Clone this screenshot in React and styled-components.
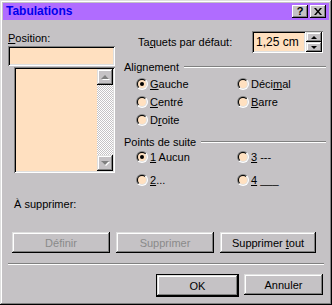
import styled, { createGlobalStyle } from "styled-components";

const GRAY = "#c5c2c5";
const PEACH = "#ffe0c0";

const GlobalStyle = createGlobalStyle`
  html, body {
    margin: 0;
    padding: 0;
    background: ${GRAY};
  }
  body {
    font-family: "Liberation Sans", Arial, sans-serif;
    font-size: 11px;
    color: #000;
  }
  u {
    text-underline-offset: 1px;
  }
`;

const Window = styled.div`
  width: 332px;
  height: 305px;
  box-sizing: border-box;
  padding: 3px;
  background: ${GRAY};
  box-shadow: inset -1px -1px #000, inset 1px 1px #dfdfdf, inset -2px -2px #808080,
    inset 2px 2px #fff;
  display: flex;
  flex-direction: column;
`;

const TitleBar = styled.div`
  height: 17px;
  background: #b06cff;
  display: flex;
  align-items: center;
  padding: 0 3px 0 2px;
`;

const TitleText = styled.span`
  flex: 1;
  font-family: "Liberation Sans", Arial, sans-serif;
  font-weight: 700;
  font-size: 12px;
  color: blue;
  -webkit-text-fill-color: #0000ee;
  line-height: 17px;
  padding-left: 1px;
`;

const TitleButton = styled.div`
  width: 16px;
  height: 13px;
  margin-left: ${(p) => (p.$gap ? "2px" : "0")};
  background: ${GRAY};
  box-shadow: inset -1px -1px #000, inset 1px 1px #fff, inset -2px -2px #808080;
  display: flex;
  align-items: center;
  justify-content: center;
  font-weight: bold;
  font-size: 11px;
  line-height: 11px;
`;

const Body = styled.div`
  flex: 1;
  display: flex;
  flex-direction: column;
  padding: 0 3px 0 5px;
`;

const TopRow = styled.div`
  display: flex;
  height: 169px;
`;

const LeftCol = styled.div`
  width: 107px;
  display: flex;
  flex-direction: column;
  padding-top: 12px;
`;

const RightCol = styled.div`
  flex: 1;
  margin-left: 9px;
  display: flex;
  flex-direction: column;
  padding-top: 11px;
`;

const Label = styled.div`
  line-height: 13px;
  height: 13px;
  white-space: nowrap;
`;

const Sunken = styled.div`
  background: ${PEACH};
  box-sizing: border-box;
  box-shadow: inset 1px 1px #808080, inset -1px -1px #fff, inset 2px 2px #000,
    inset -2px -2px #dfdfdf;
`;

const PositionInput = styled(Sunken)`
  height: 20px;
  margin-top: 1px;
`;

const ListBox = styled(Sunken)`
  height: 106px;
  margin: 1px 0 0 6px;
  padding: 2px;
  display: flex;
  justify-content: flex-end;
`;

const ScrollBar = styled.div`
  width: 16px;
  display: flex;
  flex-direction: column;
  justify-content: space-between;
  background: repeating-conic-gradient(#fff 0 25%, ${GRAY} 0 50%) 0 0 / 2px 2px;
`;

const RaisedBox = styled.div`
  background: ${GRAY};
  box-shadow: inset -1px -1px #000, inset 1px 1px #dfdfdf, inset -2px -2px #808080,
    inset 2px 2px #fff;
  display: flex;
  align-items: center;
  justify-content: center;
`;

const ScrollButton = styled(RaisedBox)`
  width: 16px;
  height: 16px;
`;

const Arrow = styled.div`
  width: 0;
  height: 0;
  border-left: ${(p) => p.$size}px solid transparent;
  border-right: ${(p) => p.$size}px solid transparent;
  ${(p) =>
    p.$down
      ? `border-top: ${p.$size}px solid ${p.$color};`
      : `border-bottom: ${p.$size}px solid ${p.$color};`}
  filter: ${(p) => (p.$disabled ? "drop-shadow(1px 1px 0 #fff)" : "none")};
`;

const TaquetsRow = styled.div`
  height: 22px;
  display: flex;
  align-items: center;
  padding-left: 14px;
  padding-right: 3px;
`;

const SpinField = styled.div`
  margin-left: auto;
  display: flex;
  height: 22px;
`;

const SpinInput = styled(Sunken)`
  width: 54px;
  padding: 0 0 0 4px;
  line-height: 22px;
  font-size: 12px;
  white-space: nowrap;
`;

const SpinButtons = styled.div`
  width: 17px;
  display: flex;
  flex-direction: column;
  box-shadow: inset 0 1px #808080, inset -1px -1px #fff;
  padding: 1px 1px 1px 0;
  box-sizing: border-box;
`;

const SpinButton = styled(RaisedBox)`
  flex: 1;
`;

const GroupHeader = styled.div`
  display: flex;
  align-items: center;
  height: 13px;
  margin-top: ${(p) => p.$top}px;
  white-space: nowrap;
`;

const Etched = styled.div`
  flex: 1;
  margin-left: 5px;
  height: 0;
  border-top: 1px solid #808080;
  border-bottom: 1px solid #fff;
`;

const RadioGrid = styled.div`
  display: grid;
  grid-template-columns: 101px 1fr;
  grid-auto-rows: 18px;
  row-gap: ${(p) => p.$rowGap}px;
  padding-left: 12px;
  margin-top: ${(p) => p.$top}px;
`;

const RadioItem = styled.div`
  display: flex;
  align-items: center;
  white-space: nowrap;
`;

const RadioOuter = styled.div`
  width: 12px;
  height: 12px;
  border-radius: 50%;
  background: linear-gradient(135deg, #808080 50%, #fff 50%);
  padding: 1px;
  box-sizing: border-box;
  margin-right: 2px;
  flex-shrink: 0;
`;

const RadioInner = styled.div`
  width: 10px;
  height: 10px;
  border-radius: 50%;
  background: linear-gradient(135deg, #000 50%, #dfdfdf 50%);
  padding: 1px;
  box-sizing: border-box;
`;

const RadioFace = styled.div`
  width: 8px;
  height: 8px;
  border-radius: 50%;
  background: ${PEACH};
  display: flex;
  align-items: center;
  justify-content: center;
`;

const Dot = styled.div`
  width: 4px;
  height: 4px;
  border-radius: 50%;
  background: #000;
`;

const DeleteLabel = styled(Label)`
  margin: 9px 0 0 6px;
`;

const ButtonRow = styled.div`
  display: flex;
  gap: 6px;
  padding-left: 4px;
  margin-top: 21px;
`;

const Button = styled(RaisedBox)`
  width: ${(p) => p.$w}px;
  height: 21px;
  box-sizing: border-box;
  color: ${(p) => (p.$disabled ? "#8a8a8a" : "#000")};
  white-space: nowrap;
`;

const DefaultButton = styled.div`
  border: 1px solid #000;
  display: flex;
`;

const Separator = styled.div`
  height: 0;
  border-top: 1px solid #808080;
  border-bottom: 1px solid #fff;
  margin: 10px 2px 0 0;
`;

const BottomRow = styled.div`
  display: flex;
  justify-content: flex-end;
  align-items: flex-start;
  gap: 5px;
  margin-top: 9px;
  padding-right: 3px;
`;

const Radio = ({ checked, children }) => (
  <RadioItem>
    <RadioOuter>
      <RadioInner>
        <RadioFace>{checked && <Dot />}</RadioFace>
      </RadioInner>
    </RadioOuter>
    <span>{children}</span>
  </RadioItem>
);

const App = () => {
  return (
    <Window>
      <GlobalStyle />
      <TitleBar>
        <TitleText>Tabulations</TitleText>
        <TitleButton>?</TitleButton>
        <TitleButton $gap>
          <svg width="8" height="7" viewBox="0 0 8 7">
            <path d="M0 0h2l2 2.5L6 0h2L5 3.5 8 7H6L4 4.5 2 7H0l3-3.5z" fill="#000" />
          </svg>
        </TitleButton>
      </TitleBar>
      <Body>
        <TopRow>
          <LeftCol>
            <Label>
              <u>P</u>osition:
            </Label>
            <PositionInput />
            <ListBox>
              <ScrollBar>
                <ScrollButton>
                  <Arrow $size={4} $color="#808080" $disabled />
                </ScrollButton>
                <ScrollButton>
                  <Arrow $size={4} $color="#808080" $down $disabled />
                </ScrollButton>
              </ScrollBar>
            </ListBox>
          </LeftCol>
          <RightCol>
            <TaquetsRow>
              <Label>
                Ta<u>q</u>uets par défaut:
              </Label>
              <SpinField>
                <SpinInput>1,25 cm</SpinInput>
                <SpinButtons>
                  <SpinButton>
                    <Arrow $size={3} $color="#000" />
                  </SpinButton>
                  <SpinButton>
                    <Arrow $size={3} $color="#000" $down />
                  </SpinButton>
                </SpinButtons>
              </SpinField>
            </TaquetsRow>
            <GroupHeader $top={7}>
              Alignement
              <Etched />
            </GroupHeader>
            <RadioGrid $top={2} $rowGap={0}>
              <Radio checked>
                <u>G</u>auche
              </Radio>
              <Radio>
                Déci<u>m</u>al
              </Radio>
              <Radio>
                <u>C</u>entré
              </Radio>
              <Radio>
                <u>B</u>arre
              </Radio>
              <Radio>
                D<u>r</u>oite
              </Radio>
            </RadioGrid>
            <GroupHeader $top={6}>
              Points de suite
              <Etched />
            </GroupHeader>
            <RadioGrid $top={0} $rowGap={5}>
              <Radio checked>
                <u>1</u> Aucun
              </Radio>
              <Radio>
                <u>3</u> ---
              </Radio>
              <Radio>
                <u>2</u>...
              </Radio>
              <Radio>
                <u>4</u> ___
              </Radio>
            </RadioGrid>
          </RightCol>
        </TopRow>
        <DeleteLabel>À supprimer:</DeleteLabel>
        <ButtonRow>
          <Button $w={98} $disabled>
            <span>Définir</span>
          </Button>
          <Button $w={98} $disabled>
            <span>Supprimer</span>
          </Button>
          <Button $w={96}>
            <span>
              Supprimer <u>t</u>out
            </span>
          </Button>
        </ButtonRow>
        <Separator />
        <BottomRow>
          <DefaultButton>
            <Button $w={81}>
              <span>OK</span>
            </Button>
          </DefaultButton>
          <Button $w={79}>
            <span>Annuler</span>
          </Button>
        </BottomRow>
      </Body>
    </Window>
  );
};

export default App;
